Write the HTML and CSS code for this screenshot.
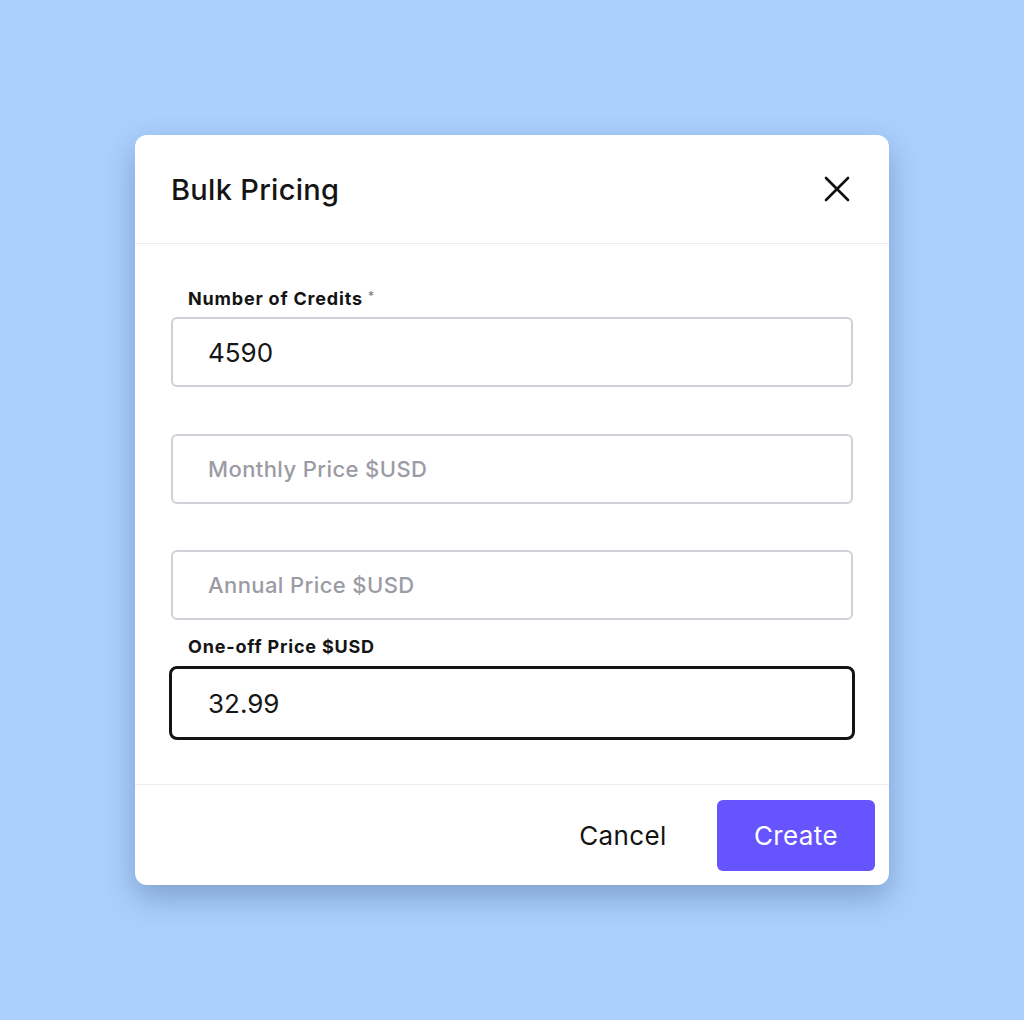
FILE: index.html
```html
<!DOCTYPE html>
<html lang="en">
<head>
<meta charset="utf-8">
<title>Bulk Pricing</title>
<link rel="stylesheet" href="styles.css">
</head>
<body>
<div class="backdrop">
  <div class="modal">
    <div class="modal-header">
      <h1 class="modal-title">Bulk Pricing</h1>
      <button class="close-btn" aria-label="Close">
        <svg width="26" height="26" viewBox="0 0 26 26"><path d="M2 2 L24 24 M24 2 L2 24" stroke="#111" stroke-width="2.6" stroke-linecap="round" fill="none"/></svg>
      </button>
    </div>
    <div class="modal-body">
      <div class="field">
        <label class="field-label">Number of Credits <span class="req">*</span></label>
        <div class="input"><span class="value">4590</span></div>
      </div>
      <div class="field field-gap">
        <div class="input"><span class="placeholder">Monthly Price $USD</span></div>
      </div>
      <div class="field field-gap2">
        <div class="input"><span class="placeholder">Annual Price $USD</span></div>
      </div>
      <div class="field field-small-gap">
        <label class="field-label">One-off Price $USD</label>
        <div class="input input-focus"><span class="value">32.99</span></div>
      </div>
    </div>
    <div class="modal-footer">
      <button class="btn btn-cancel">Cancel</button>
      <button class="btn btn-primary">Create</button>
    </div>
  </div>
</div>
</body>
</html>
```
FILE: styles.css
```css
* { box-sizing: border-box; }
html, body { margin: 0; padding: 0; }
body {
  background: #abd0fd;
  font-family: Inter, "Noto Sans", "Liberation Sans", sans-serif;
  color: #111;
}
.backdrop {
  width: 1024px;
  height: 1020px;
  display: flex;
  align-items: center;
  justify-content: center;
}
.modal {
  width: 754px;
  height: 750px;
  background: #fff;
  border-radius: 12px;
  box-shadow: 0 12px 30px rgba(40, 70, 120, 0.35);
  display: flex;
  flex-direction: column;
}
.modal-header {
  height: 109px;
  border-bottom: 1.5px solid #ebebf3;
  display: flex;
  align-items: center;
  justify-content: space-between;
  padding: 0 39px 0 36px;
}
.modal-title {
  margin: 0;
  font-size: 29px;
  font-weight: 500;
  letter-spacing: 0.3px;
  color: #141414;
}
.close-btn {
  border: 0;
  background: none;
  padding: 0;
  width: 26px;
  height: 26px;
  display: flex;
}
.modal-body {
  flex: 1;
  padding: 37px 36px 0 36px;
}
.field { display: flex; flex-direction: column; }
.field-gap { margin-top: 47px; }
.field-gap2 { margin-top: 46px; }
.field-small-gap { margin-top: 12px; }
.field-label {
  font-size: 18px;
  font-weight: 700;
  line-height: 29px;
  height: 36px;
  padding-left: 17px;
  color: #141414;
  letter-spacing: 0.8px;
}
.req {
  font-size: 12px;
  color: #888;
  vertical-align: 5px;
  font-weight: 600;
}
.input {
  height: 70px;
  border: 2px solid #d0d0d9;
  border-radius: 6px;
  display: flex;
  align-items: center;
  padding-left: 35px;
}
.input-focus {
  margin: -2px -2px 0 -2px;
  height: 74px;
  border: 3px solid #141414;
  border-radius: 8px;
  padding-left: 36px;
}
.value {
  font-size: 26px;
  color: #161616;
}
.placeholder {
  font-size: 22px;
  font-weight: 500;
  letter-spacing: 0.4px;
  color: #9b9ba5;
}
.modal-footer {
  height: 101px;
  border-top: 1.5px solid #ebebf3;
  display: flex;
  align-items: center;
  justify-content: flex-end;
  gap: 15px;
  padding: 0 14px 0 0;
}
.btn {
  height: 71px;
  width: 158px;
  border: 0;
  border-radius: 6px;
  font-family: Inter, "Noto Sans", "Liberation Sans", sans-serif;
  font-size: 26px;
  letter-spacing: 0.4px;
  cursor: pointer;
}
.btn-cancel {
  background: transparent;
  color: #141414;
}
.btn-primary {
  background: #6655ff;
  color: #fff;
}
```
